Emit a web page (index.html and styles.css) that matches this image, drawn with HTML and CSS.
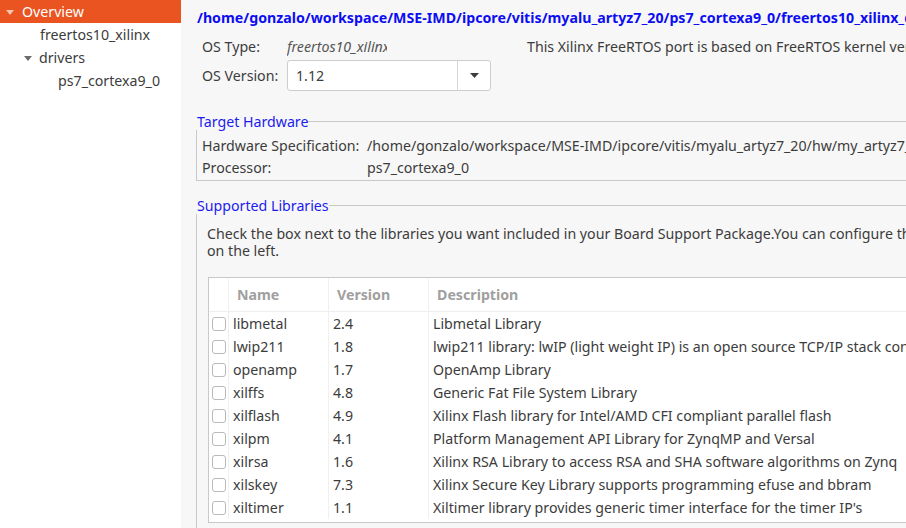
FILE: index.html
```html
<!DOCTYPE html>
<html>
<head>
<meta charset="utf-8">
<title>BSP Overview</title>
<link rel="stylesheet" href="styles.css">
</head>
<body>
<div class="app">
  <aside class="tree">
    <div class="node sel"><span class="tw tw-light"></span><span class="nt">Overview</span></div>
    <div class="node lvl1"><span class="nt">freertos10_xilinx</span></div>
    <div class="node lvl0b"><span class="tw tw-dark"></span><span class="nt">drivers</span></div>
    <div class="node lvl2"><span class="nt">ps7_cortexa9_0</span></div>
  </aside>
  <main class="main">
    <div class="path">/home/gonzalo/workspace/MSE-IMD/ipcore/vitis/myalu_artyz7_20/ps7_cortexa9_0/freertos10_xilinx_domain/bsp</div>
    <div class="osrow">
      <span class="lbl">OS Type:</span>
      <span class="ostype">freertos10_xilinx</span>
      <span class="osdesc">This Xilinx FreeRTOS port is based on FreeRTOS kernel version 10.4.6</span>
    </div>
    <div class="osrow osver">
      <span class="lbl">OS Version:</span>
      <div class="combo">
        <span class="cv">1.12</span>
        <span class="cbtn"><svg width="9" height="5" viewBox="0 0 9 5"><path d="M0 0h9L4.5 5z" fill="#3c3c3c"/></svg></span>
      </div>
    </div>

    <section class="group hwgroup">
      <div class="ghead"><span class="gtitle">Target Hardware</span><span class="gline"></span></div>
      <div class="gbody hwbody">
        <div class="hwrow"><span class="hwl">Hardware Specification:</span><span class="hwv">/home/gonzalo/workspace/MSE-IMD/ipcore/vitis/myalu_artyz7_20/hw/my_artyz7_20_wrapper.xsa</span></div>
        <div class="hwrow"><span class="hwl">Processor:</span><span class="hwv">ps7_cortexa9_0</span></div>
      </div>
    </section>

    <section class="group libgroup">
      <div class="ghead"><span class="gtitle">Supported Libraries</span><span class="gline"></span></div>
      <div class="gbody libbody">
        <p class="hint">Check the box next to the libraries you want included in your Board Support Package.You can configure the<br>on the left.</p>
        <div class="tbl">
          <div class="tr th">
            <div class="td c0"></div>
            <div class="td c1">Name</div>
            <div class="td c2">Version</div>
            <div class="td c3">Description</div>
          </div>
          <div class="tr"><div class="td c0"><span class="cb"></span></div><div class="td c1">libmetal</div><div class="td c2">2.4</div><div class="td c3">Libmetal Library</div></div>
          <div class="tr"><div class="td c0"><span class="cb"></span></div><div class="td c1">lwip211</div><div class="td c2">1.8</div><div class="td c3">lwip211 library: lwIP (light weight IP) is an open source TCP/IP stack configured for Xilinx hard and soft Ethernet MACs</div></div>
          <div class="tr"><div class="td c0"><span class="cb"></span></div><div class="td c1">openamp</div><div class="td c2">1.7</div><div class="td c3">OpenAmp Library</div></div>
          <div class="tr"><div class="td c0"><span class="cb"></span></div><div class="td c1">xilffs</div><div class="td c2">4.8</div><div class="td c3">Generic Fat File System Library</div></div>
          <div class="tr"><div class="td c0"><span class="cb"></span></div><div class="td c1">xilflash</div><div class="td c2">4.9</div><div class="td c3">Xilinx Flash library for Intel/AMD CFI compliant parallel flash</div></div>
          <div class="tr"><div class="td c0"><span class="cb"></span></div><div class="td c1">xilpm</div><div class="td c2">4.1</div><div class="td c3">Platform Management API Library for ZynqMP and Versal</div></div>
          <div class="tr"><div class="td c0"><span class="cb"></span></div><div class="td c1">xilrsa</div><div class="td c2">1.6</div><div class="td c3">Xilinx RSA Library to access RSA and SHA software algorithms on Zynq</div></div>
          <div class="tr"><div class="td c0"><span class="cb"></span></div><div class="td c1">xilskey</div><div class="td c2">7.3</div><div class="td c3">Xilinx Secure Key Library supports programming efuse and bbram</div></div>
          <div class="tr"><div class="td c0"><span class="cb"></span></div><div class="td c1">xiltimer</div><div class="td c2">1.1</div><div class="td c3">Xiltimer library provides generic timer interface for the timer IP's</div></div>
        </div>
      </div>
    </section>
  </main>
</div>
</body>
</html>
```

FILE: styles.css
```css
* { box-sizing: border-box; }
html, body { margin: 0; padding: 0; }
body {
  font-family: "Noto Sans", "Open Sans", sans-serif;
  font-size: 14.2px;
  color: #3c3c3c;
  background: #f7f7f7;
  width: 906px;
  height: 528px;
  overflow: hidden;
}
.app { display: flex; height: 528px; overflow: hidden; }

/* tree */
.tree { width: 181px; flex: none; background: #ffffff; }
.node {
  height: 23px;
  display: flex;
  align-items: center;
  white-space: nowrap;
  color: #3c3c3c;
}
.node.sel { background: #e95420; color: #ffffff; height: 23px; padding-left: 6px; }
.node.sel .nt { margin-left: 8px; }
.node.lvl1 { padding-left: 40px; }
.node.lvl0b { padding-left: 24px; }
.node.lvl0b .nt { margin-left: 7px; }
.node.lvl2 { padding-left: 58px; }
.tw {
  width: 0; height: 0;
  border-left: 4.5px solid transparent;
  border-right: 4.5px solid transparent;
  border-top: 5px solid #6b6b6b;
  margin-top: 1px;
}
.tw.tw-light { border-top-color: #f5c3ad; }

/* main */
.main {
  flex: 1;
  min-width: 0;
  overflow: hidden;
  padding-left: 15px;
  background: #f7f7f7;
}
.path {
  padding: 8px 0 6px 1px;
  line-height: 20px;
  height: 34px;
  font-weight: bold;
  color: #0d0df2;
  white-space: nowrap;
}
.osrow {
  display: flex;
  align-items: center;
  height: 24px;
  padding-left: 6px;
  white-space: nowrap;
}
.lbl { width: 85px; flex: none; }
.ostype {
  width: 100px;
  flex: none;
  overflow: hidden;
  font-style: italic;
  color: #555555;
}
.osdesc { margin-left: 140px; }
.osver { height: 31px; margin-top: 2px; }
.combo {
  width: 204px;
  height: 31px;
  display: flex;
  align-items: center;
  background: #ffffff;
  border: 1px solid #cdcdcd;
  border-radius: 3px;
}
.cv { flex: 1; padding-left: 8px; }
.cbtn {
  width: 33px;
  height: 100%;
  border-left: 1px solid #d6d6d6;
  display: flex;
  align-items: center;
  justify-content: center;
}

/* groups */
.group { white-space: nowrap; }
.hwgroup { margin-top: 21px; }
.libgroup { margin-top: 15px; }
.ghead { display: flex; align-items: center; height: 18px; }
.gtitle { color: #1c1cf0; padding-left: 1px; }
.gline { flex: 1; border-top: 1px solid #c9c9c9; margin-top: 1px; }
.gbody { border-left: 1px solid #c9c9c9; }
.hwbody { padding: 4px 0 2px 5px; border-bottom: 1px solid #c9c9c9; }
.hwrow { display: flex; align-items: center; height: 22px; }
.hwl { width: 165px; flex: none; }

.libbody { padding: 11px 0 0 10px; height: 400px; }
.hint { margin: 0; line-height: 17px; }

/* table */
.tbl {
  margin-top: 18px;
  margin-left: 1px;
  width: 900px;
  background: #ffffff;
  border: 1px solid #c9c9c9;
  padding-bottom: 3px;
}
.tr {
  display: grid;
  grid-template-columns: 20px 100px 100px 1fr;
  height: 23px;
}
.td {
  display: flex;
  align-items: center;
  padding-left: 4px;
  border-right: 1px solid #f0f0f0;
  overflow: hidden;
  white-space: nowrap;
}
.td.c3 { border-right: none; }
.th { height: 34px; border-bottom: 1px solid #eeeeee; }
.th .td { padding-left: 8px; font-weight: bold; color: #a0a0a0; }
.td.c0 { padding-left: 3px; }
.cb {
  width: 14px;
  height: 14px;
  border: 1px solid #b9b9b9;
  border-radius: 3px;
  background: #ffffff;
}
```
